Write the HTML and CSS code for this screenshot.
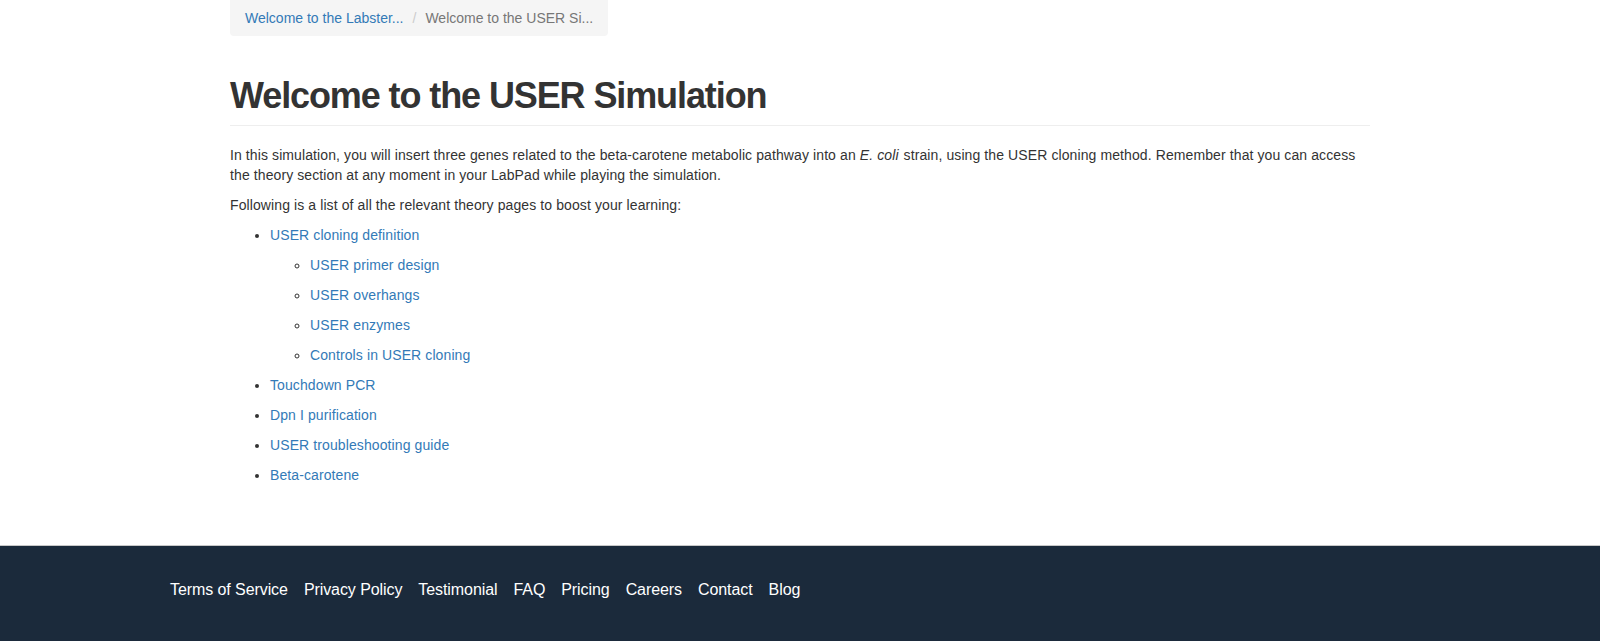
FILE: index.html
```html
<!DOCTYPE html>
<html lang="en">
<head>
<meta charset="utf-8">
<title>Welcome to the USER Simulation</title>
<link rel="stylesheet" href="styles.css">
</head>
<body>
<main class="container">
  <ol class="breadcrumb">
    <li><a href="#">Welcome to the Labster...</a></li>
    <li class="active">Welcome to the USER Si...</li>
  </ol>
  <div class="page-header">
    <h1>Welcome to the USER Simulation</h1>
  </div>
  <p>In this simulation, you will insert three genes related to the beta-carotene metabolic pathway into an <em>E. coli</em> strain, using the USER cloning method. Remember that you can access the theory section at any moment in your LabPad while playing the simulation.</p>
  <p>Following is a list of all the relevant theory pages to boost your learning:</p>
  <ul class="theory-list">
    <li><a href="#">USER cloning definition</a>
      <ul>
        <li><a href="#">USER primer design</a></li>
        <li><a href="#">USER overhangs</a></li>
        <li><a href="#">USER enzymes</a></li>
        <li><a href="#">Controls in USER cloning</a></li>
      </ul>
    </li>
    <li><a href="#">Touchdown PCR</a></li>
    <li><a href="#">Dpn I purification</a></li>
    <li><a href="#">USER troubleshooting guide</a></li>
    <li><a href="#">Beta-carotene</a></li>
  </ul>
</main>
<footer class="site-footer">
  <nav class="footer-inner">
    <a href="#">Terms of Service</a>
    <a href="#">Privacy Policy</a>
    <a href="#">Testimonial</a>
    <a href="#">FAQ</a>
    <a href="#">Pricing</a>
    <a href="#">Careers</a>
    <a href="#">Contact</a>
    <a href="#">Blog</a>
  </nav>
</footer>
</body>
</html>
```
FILE: styles.css
```css
html, body {
  margin: 0;
  padding: 0;
  background: #fff;
}
body {
  font-family: "Liberation Sans", Arial, Helvetica, sans-serif;
  font-size: 14px;
  line-height: 20px;
  color: #333;
  letter-spacing: 0.1px;
}
a {
  color: #337ab7;
  text-decoration: none;
}
.container {
  width: 1140px;
  margin: 0 auto;
  padding: 0 15px 50px;
  box-sizing: content-box;
}
.breadcrumb {
  display: inline-flex;
  margin: 0;
  padding: 8px 15px;
  list-style: none;
  background: #f5f5f5;
  border-radius: 0 0 4px 4px;
  letter-spacing: 0;
}
.breadcrumb li + li::before {
  content: "/";
  color: #ccc;
  padding: 0 9px;
}
.breadcrumb .active {
  color: #777;
}
.page-header {
  margin: 40px 0 19px;
  padding-bottom: 9px;
  border-bottom: 1px solid #eee;
}
.page-header h1 {
  margin: 0;
  font-size: 36px;
  line-height: 1.1;
  font-weight: bold;
  letter-spacing: -1.1px;
  color: #333;
}
p {
  margin: 0 0 10px;
}
em {
  padding-right: 1px;
}
.theory-list {
  margin: 1px 0 0;
  padding-left: 40px;
}
.theory-list li {
  margin-bottom: 10px;
}
.theory-list ul {
  margin: 10px 0 0;
  padding-left: 40px;
  list-style: circle;
}
.site-footer {
  background: #1b2a3b;
  border-top: 1px solid #c8c8c8;
  padding: 33px 0 41px;
}
.footer-inner {
  width: 1260px;
  margin: 0 auto;
  display: flex;
  gap: 16px;
  font-size: 16px;
  line-height: 22px;
  letter-spacing: -0.08px;
}
.footer-inner a {
  color: #fff;
}
```
